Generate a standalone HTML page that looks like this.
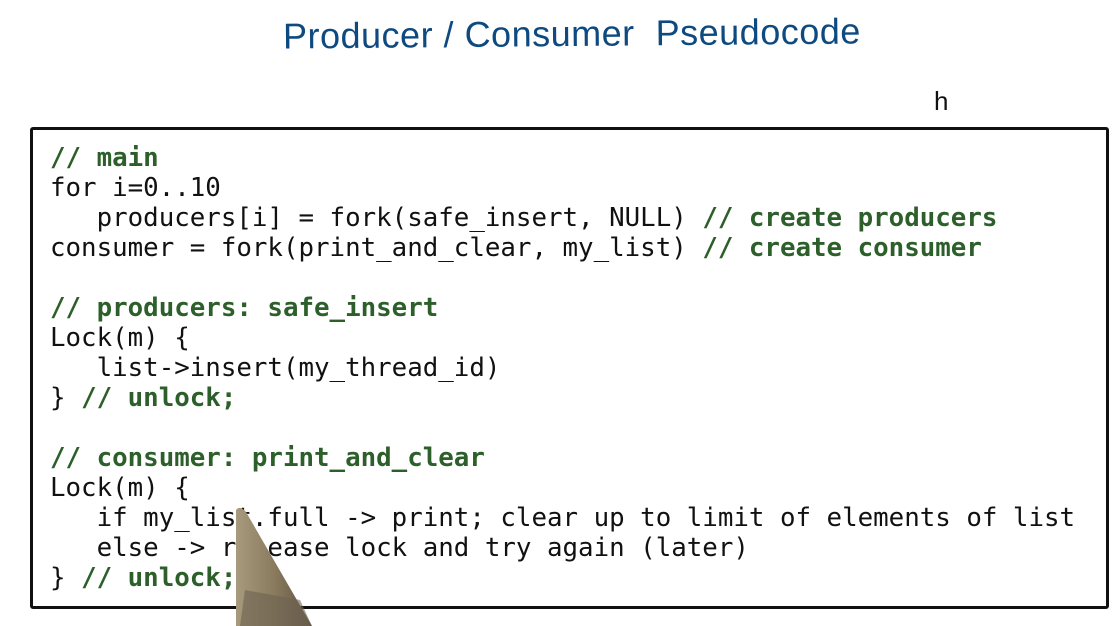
<!DOCTYPE html>
<html><head><meta charset="utf-8"><style>
html,body{margin:0;padding:0;background:#fff;width:1120px;height:626px;overflow:hidden;position:relative}
.title{position:absolute;left:283px;top:13px;font-family:"Liberation Sans",sans-serif;font-size:36px;color:#0e4a80;letter-spacing:0.5px;white-space:nowrap;transform:rotate(-0.5deg)}
.box{position:absolute;left:30px;top:127px;width:1073px;height:476px;border:3px solid #111;border-radius:3px}
pre{position:absolute;left:50px;top:143px;margin:0;font-family:"DejaVu Sans Mono","Liberation Mono",monospace;font-size:25.8px;line-height:30px;color:#111}
.c{color:#2c5f2a;font-weight:bold}
.h{position:absolute;left:934px;top:86px;font-family:"Liberation Sans",sans-serif;font-size:26px;color:#111}
svg{position:absolute;left:0;top:0}
</style></head><body>
<div class="title">Producer / Consumer&nbsp; Pseudocode</div>
<div class="h">h</div>
<div class="box"></div>
<pre><span class="c">// main</span>
for i=0..10
   producers[i] = fork(safe_insert, NULL) <span class="c">// create producers</span>
consumer = fork(print_and_clear, my_list) <span class="c">// create consumer</span>

<span class="c">// producers: safe_insert</span>
Lock(m) {
   list-&gt;insert(my_thread_id)
} <span class="c">// unlock;</span>

<span class="c">// consumer: print_and_clear</span>
Lock(m) {
   if my_list.full -&gt; print; clear up to limit of elements of list
   else -&gt; release lock and try again (later)
} <span class="c">// unlock;</span></pre>
<svg width="1120" height="626"><defs><linearGradient id="g" x1="0" x2="1"><stop offset="0" stop-color="#a89a7c"/><stop offset="0.5" stop-color="#8a7b5e"/><stop offset="1" stop-color="#5e5444"/></linearGradient></defs>
<path d="M236 510 Q240 505 246 512 L312 626 L236 626 Z" fill="url(#g)"/>
<path d="M245 590 L300 600 L312 626 L240 626 Z" fill="#6e6352" opacity="0.6"/></svg>
</body></html>
